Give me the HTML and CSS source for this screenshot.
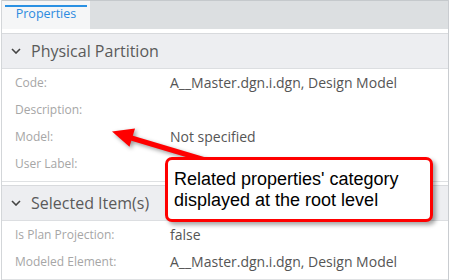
FILE: index.html
```html
<!doctype html>
<html lang="en">
  <head>
    <meta charset="utf-8" />
    <title>Properties</title>
    <link rel="stylesheet" href="styles.css">
  </head>
  <body>
    <div class="panel">
      <div class="tabs">
        <div class="tab"><span class="tab-label">Properties</span></div>
      </div>

      <div class="content">
        <!-- Physical Partition -->
        <section class="category">
          <div class="category-header">
            <svg class="chevron" width="10" height="6" viewBox="0 0 10 6">
              <path d="M1 1 L5 5 L9 1" fill="none" stroke="#444" stroke-width="1.6" />
            </svg>
            <span>Physical Partition</span>
          </div>
          <div class="rows">
            <div class="row"><span class="label">Code:</span><span class="value">A__Master.dgn.i.dgn, Design Model</span></div>
            <div class="row"><span class="label">Description:</span><span class="value"></span></div>
            <div class="row"><span class="label">Model:</span><span class="value">Not specified</span></div>
            <div class="row"><span class="label">User Label:</span><span class="value"></span></div>
          </div>
        </section>

        <!-- Selected Item(s) -->
        <section class="category">
          <div class="category-header">
            <svg class="chevron" width="10" height="6" viewBox="0 0 10 6">
              <path d="M1 1 L5 5 L9 1" fill="none" stroke="#444" stroke-width="1.6" />
            </svg>
            <span>Selected Item(s)</span>
          </div>
          <div class="rows">
            <div class="row"><span class="label">Is Plan Projection:</span><span class="value">false</span></div>
            <div class="row"><span class="label">Modeled Element:</span><span class="value">A__Master.dgn.i.dgn, Design Model</span></div>
          </div>
        </section>
      </div>
    </div>

    <!-- annotation -->
    <svg class="arrow" width="450" height="280" viewBox="0 0 450 280">
      <line x1="128" y1="137" x2="205" y2="160" stroke="#ff0000" stroke-width="5" />
      <polygon points="112,131.5 135,128.5 129.5,146.7" fill="#ff0000" />
    </svg>
    <div class="callout">Related properties' category<br>displayed at the root level</div>
  </body>
</html>
```

FILE: styles.css
```css
body {
  margin: 0;
  font-family: "Open Sans", sans-serif;
  background-color: #fff;
  position: relative;
  width: 450px;
  height: 280px;
  overflow: hidden;
}

.panel {
  margin-left: 1px;
  width: 446px;
  height: 280px;
  border-left: 1px solid #d3d6d9;
  border-right: 1px solid #c9ccd0;
}

.tabs {
  display: flex;
  height: 28px;
  background-color: #dcdfe1;
  border-top: 1px solid #c5c9cc;
}

.tab {
  width: 88px;
  padding: 4px 3px 0;
  box-sizing: border-box;
  background-color: #f5f6f7;
}

.tab-label {
  display: block;
  border-top: 2px solid #2a91e3;
  color: #2c8be0;
  font-size: 12.5px;
  line-height: 14px;
  text-align: center;
}

.content {
  padding-top: 4px;
}

.category {
  border-top: 1px solid #d8dadd;
  border-bottom: 1px solid #dfe1e3;
}

.category + .category {
  margin-top: 3px;
}

.category-header {
  display: flex;
  align-items: center;
  gap: 10px;
  height: 34px;
  padding-left: 9px;
  background-color: #edeef1;
  border-bottom: 1px solid #dcdee1;
  color: #5a5a5a;
  font-size: 16px;
}

.chevron {
  flex: none;
}

.rows {
  padding-bottom: 4px;
}

.row {
  display: grid;
  grid-template-columns: 155px 1fr;
  height: 27px;
  line-height: 27px;
  padding-left: 13px;
  font-size: 14px;
}

.label {
  color: #a6a6a6;
  font-size: 12px;
}

.value {
  color: #555;
  white-space: nowrap;
}

.arrow {
  position: absolute;
  left: 0;
  top: 0;
  pointer-events: none;
  filter: drop-shadow(2px 2px 2px rgba(0, 0, 0, 0.4));
}

.callout {
  position: absolute;
  left: 165px;
  top: 157px;
  width: 268px;
  height: 65px;
  box-sizing: border-box;
  padding: 9px 6px 6px;
  background-color: #fff;
  border: 3px solid #ff0000;
  border-radius: 7px;
  box-shadow: 3px 3px 4px rgba(0, 0, 0, 0.35);
  font-family: "Liberation Sans", Arial, sans-serif;
  font-size: 18px;
  line-height: 21px;
  color: #000;
  white-space: nowrap;
}
```
